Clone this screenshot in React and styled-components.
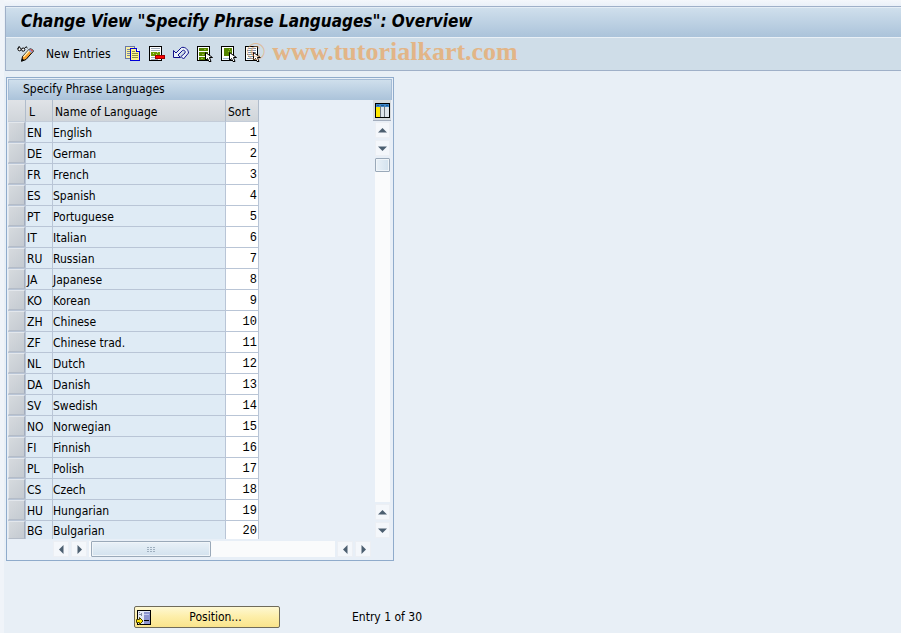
import React, { useState } from 'react'
import styled, { createGlobalStyle } from 'styled-components'

const languages = [
    ['EN', 'English'],
    ['DE', 'German'],
    ['FR', 'French'],
    ['ES', 'Spanish'],
    ['PT', 'Portuguese'],
    ['IT', 'Italian'],
    ['RU', 'Russian'],
    ['JA', 'Japanese'],
    ['KO', 'Korean'],
    ['ZH', 'Chinese'],
    ['ZF', 'Chinese trad.'],
    ['NL', 'Dutch'],
    ['DA', 'Danish'],
    ['SV', 'Swedish'],
    ['NO', 'Norwegian'],
    ['FI', 'Finnish'],
    ['PL', 'Polish'],
    ['CS', 'Czech'],
    ['HU', 'Hungarian'],
    ['BG', 'Bulgarian'],
]

const GlobalStyle = createGlobalStyle`
    * {
        box-sizing: border-box;
    }
    body {
        margin: 0;
        background: #e8eff6;
        color: #000;
        font: 12px/20px 'DejaVu Sans Condensed', 'DejaVu Sans', sans-serif;
        font-stretch: condensed;
    }
    button, input {
        font: inherit;
        color: inherit;
        border: 0;
        margin: 0;
        padding: 0;
    }
`

const Page = styled.div`
    min-height: 100vh;
    padding: 6px 0 0 1px;
    border-left: 4px solid #f0f4f9;
    background: linear-gradient(#f4f7fb, #eaf0f8 6px, #e8eff6 7px);
`

const Header = styled.header`
    border: 1px solid #9fb0c8;
    border-right: 0;
`

const Title = styled.h1`
    margin: 0;
    height: 31px;
    padding: 0 15px;
    border-top: 1px solid #e4edf5;
    border-bottom: 1px solid #e9f0f6;
    background: linear-gradient(#cfdfec, #abc3da);
    font-size: 17px;
    font-style: italic;
    line-height: 26px;
    white-space: nowrap;
`

const Toolbar = styled.div`
    position: relative;
    display: flex;
    align-items: center;
    gap: 8px;
    height: 32px;
    padding: 0 11px;
    background: #cfdde8;
`

const ToolButton = styled.button`
    display: flex;
    flex: none;
    background: none;
    white-space: nowrap;
`

const TextButton = styled(ToolButton)`
    margin: 0 6px 0 4px;
`

const Watermark = styled.span`
    position: absolute;
    left: 240px;
    top: 0;
    color: #e9a867;
    opacity: 0.75;
    font: bold 26px/28px 'Liberation Serif', serif;
    white-space: nowrap;
    pointer-events: none;
`

const Mark = styled.span`
    font-weight: normal;
    opacity: 0.8;
`

const Main = styled.main`
    padding: 6px 0 0 1px;
`

const Panel = styled.section`
    width: 388px;
    max-width: 100%;
    border: 1px solid #8fabcb;
    padding: 1px;
    background: #e8eff7;
`

const PanelTitle = styled.h2`
    margin: 0;
    height: 21px;
    padding: 0 14px;
    border: 1px solid #a5bcd6;
    border-bottom: 0;
    background: linear-gradient(#cfdfec, #abc3da);
    font-size: 12px;
    font-weight: normal;
    line-height: 18px;
`

const PanelBody = styled.div`
    display: flex;
    justify-content: space-between;
`

const Table = styled.table`
    table-layout: fixed;
    width: 251px;
    border-collapse: separate;
    border-spacing: 0;
`

const Th = styled.th`
    width: ${props => props.$width};
    height: 22px;
    padding: 2px 2px 0 ${props => props.$indent || '2px'};
    border-right: 1px solid #b0bccb;
    border-bottom: 1px solid #c3ccd8;
    background: linear-gradient(#e0e3e7, #d0d5da);
    font-weight: normal;
    line-height: 18px;
    text-align: left;
    white-space: nowrap;
`

const Td = styled.td`
    height: 21px;
    padding: ${props => (props.$control ? '0' : '2px')} 0 0 ${props => (props.$indent ? '1px' : '0')};
    border-right: 1px solid #b9c5d6;
    border-bottom: 1px solid #b9c5d6;
    background: ${props => (props.$editable ? '#fff' : '#dfebf5')};
    line-height: 18px;
    white-space: nowrap;

    tr:last-child > & {
        height: 18px;
        border-bottom: 0;
        line-height: 16px;
    }
`

const RowSelector = styled.button`
    display: block;
    width: 17px;
    height: ${props => (props.$last ? '18px' : '20px')};
    border: 1px solid #e3e7ec;
    border-right-color: #a3adbd;
    border-bottom-color: #b4bcc8;
    background: ${props =>
        props.$selected ? '#f5d77c' : 'linear-gradient(135deg, #d6dade, #c4cad1)'};
`

const SortInput = styled.input`
    display: block;
    width: 100%;
    height: ${props => (props.$last ? '18px' : '20px')};
    padding: 1px 1px 0 0;
    background: none;
    font: 12px 'Liberation Mono', monospace;
    text-align: right;
    outline: none;
`

const SideBar = styled.div`
    display: flex;
    flex-direction: column;
    align-items: flex-end;
    padding-right: 1px;
`

const ConfigButton = styled.button`
    display: flex;
    align-items: center;
    justify-content: center;
    width: 18px;
    height: 21px;
    margin-bottom: 1px;
    border-bottom: 1px solid #a3adbd;
    background: #d6dade;
`

const VerticalScroll = styled.div`
    display: flex;
    flex: 1;
    flex-direction: column;
    gap: 2px;
    width: 15px;
    margin: 0 1px 1px 0;
`

const HorizontalScroll = styled.div`
    display: flex;
    gap: 2px;
    height: 16px;
    margin: 2px 21px 2px 45px;
`

const ScrollButton = styled.button`
    display: flex;
    flex: none;
    align-items: center;
    justify-content: center;
    width: ${props => (props.$vertical ? '15px' : '16px')};
    height: 16px;
    border: 1px solid #eceff4;
    background: #f4f7fb;
`

const Track = styled.div`
    flex: 1;
    padding-left: ${props => (props.$vertical ? '0' : '2px')};
    background: #fafbfc;
`

const Thumb = styled.div`
    display: flex;
    align-items: center;
    justify-content: center;
    width: ${props => (props.$vertical ? '15px' : '120px')};
    height: ${props => (props.$vertical ? '14px' : '16px')};
    border: 1px solid #9aa9b9;
    border-radius: 1px;
    background: linear-gradient(${props => (props.$vertical ? '90deg' : '180deg')}, #e9f1f8, #d3e2ee);
    box-shadow: inset 0 0 0 1px #f0f5f9;
`

const Footer = styled.footer`
    display: flex;
    align-items: center;
    gap: 72px;
    padding: 45px 0 5px 128px;
`

const PositionButton = styled.button`
    display: grid;
    grid-template-columns: 16px 1fr;
    align-items: center;
    width: 146px;
    height: 22px;
    padding: 0 0 0 1px;
    border: 1px solid #6f6b5a;
    border-radius: 2px;
    background: linear-gradient(#fef8d2, #fdeea8 50%, #fae48c);
`

const Icon = ({ children, width = 16, height = 16 }) => (
    <svg width={width} height={height} viewBox={`0 0 ${width} ${height}`} shapeRendering="crispEdges" aria-hidden="true">
        {children}
    </svg>
)

const ChangeIcon = () => (
    <svg width="17" height="16" viewBox="0 0 17 16" aria-hidden="true">
        <path d="M2.500 0L.7 2.500" fill="none" stroke="#000" />
        <circle cx="2.500" cy="3.200" r="1.600" fill="#fff" stroke="#000" />
        <circle cx="6.200" cy="3.600" r="1.600" fill="#fff" stroke="#000" />
        <path d="M7.500 2.500L9 .7l1.500 1.300" fill="none" stroke="#000" />
        <path d="M5.500 10.500l7-7.500h2l2 2-7.500 8.500-4.500 1.800z" fill="#f9a02c" stroke="#000" />
        <path d="M6.500 10.800l6-6.500" stroke="#fff7c4" strokeWidth="1.300" />
        <path d="M11.500 4.500l1.300-1.300h1.500l1.700 1.700-1.700 2z" fill="#8fa0e0" />
        <path d="M13 3.200h1.500l1.500 1.600-1 1z" fill="#e0504a" />
        <path d="M4.300 15.300l.9-3 2.200 1.900z" fill="#000" />
    </svg>
)

const CopyIcon = () => (
    <Icon>
        <path d="M.5.5h9v12h-9z" fill="#fbf2a0" stroke="#6878a8" />
        <path d="M2 3.500h3M2 5.500h3M2 7.500h3M2 9.500h3" stroke="#7483a8" />
        <path d="M5.500 2.500h6l3 3v9h-9z" fill="#fff48a" stroke="#0000d8" />
        <path d="M11.500 2.500v3h3" fill="#fff" stroke="#0000d8" />
        <path d="M7 5.500h3M7 7.500h6M7 9.500h6M7 11.500h6" stroke="#8b9148" />
    </Icon>
)

const DeleteIcon = () => (
    <Icon>
        <path d="M.5.5h12v14H.5z" fill="#fff" stroke="#000" />
        <path d="M2 2.500h9M2 4.500h9M2 11.500h5M2 13.500h7" stroke="#a0acba" />
        <path d="M2 6h9v4H2z" fill="#6c9a00" />
        <path d="M4 7h1v1H4zM7 8h1v1H7zM8 6h1v1H8z" fill="#cbdc8c" />
        <path d="M6.500 9.500h9v3h-9z" fill="#f00" stroke="#900" />
    </Icon>
)

const UndoIcon = () => (
    <svg width="16" height="16" viewBox="0 0 16 16" aria-hidden="true">
        <path
            d="M.5 4.500v7h7l-2.500-2.500 4.500-4.500c1-1 3.500.5 2.500 2.500L8 10.500l2.500 2.500 5-6c0-3-3-6.500-7-5.500L3 7z"
            fill="#e8f0f8"
            stroke="#10108c"
        />
    </svg>
)

const Cursor = () => (
    <path d="M8.500 6.500v8l2-2 1.500 3h2l-1.500-4h3z" fill="#fff" stroke="#000" shapeRendering="auto" />
)

const SelectAllIcon = () => (
    <Icon>
        <path d="M.5.5h12v14H.5z" fill="#fff" stroke="#000" />
        <path d="M2 2h9v3H2zM2 6h9v4H2zM2 11h9v3H2z" fill="#568500" />
        <path d="M7 3h2v1H7zM5 8h2v1H5zM4 12h2v1H4z" fill="#9abc3c" />
        <Cursor />
    </Icon>
)

const SelectBlockIcon = () => (
    <Icon>
        <path d="M.5.5h12v14H.5z" fill="#fff" stroke="#000" />
        <path d="M3 2h8v8H3z" fill="#568500" />
        <path d="M8 3h1v1H8zM7 5h1v1H7zM9 5h1v1H9zM8 7h1v1H8z" fill="#9abc3c" />
        <path d="M2 12.500h6" stroke="#a0b8d0" />
        <Cursor />
    </Icon>
)

const DeselectIcon = () => (
    <Icon>
        <path d="M.5.5h12v14H.5z" fill="#fff" stroke="#000" />
        <path d="M3 2.500h8M2 4.500h9M3 6.500h8M2 8.500h6M3 10.500h5M2 12.500h6" stroke="#7891a8" />
        <Cursor />
    </Icon>
)

const ConfigIcon = () => (
    <Icon width={15} height={15}>
        <path d="M.5.5h14v14H.5z" fill="#fff" stroke="#000" />
        <path d="M1 1h13v3H1z" fill="#3d85c8" />
        <path d="M1 4h4v10H1z" fill="#ffe800" />
        <path d="M6 4h3v10H6zM10 4h4v10h-4z" fill="#dfe4ea" />
        <path d="M5.500 3v11M9.500 3v11" stroke="#70777f" />
        <path d="M2 2.500h2M6 2.500h3M11 2.500h2" stroke="#1e5896" />
    </Icon>
)

const PositionIcon = () => (
    <Icon width={15} height={15}>
        <path d="M1.500.5h13v14h-13z" fill="#e4e8f4" stroke="#000" />
        <path d="M8 2h6v12H8z" fill="#8d94ce" />
        <path d="M8 4.500h5" stroke="#c3c9ee" />
        <path d="M8 10.500h5" stroke="#000" />
        <path d="M3 4.500h3M5.500 3v3M3 2.500h1" stroke="#7f879e" />
        <path d="M.5 9.500h3v-2l3.500 3.500-3.500 3.500v-2h-3z" fill="#ffe500" stroke="#4e4400" shapeRendering="auto" />
    </Icon>
)

const arrows = {
    up: 'M0 6.500l4.500-4.500L9 6.500z',
    down: 'M0 2.500h9L4.500 7z',
    left: 'M6.500 0v9L2 4.500z',
    right: 'M2.500 0v9L7 4.500z',
}

const Scroller = ({ direction, label }) => (
    <ScrollButton
        aria-label={label || `Scroll ${direction}`}
        $vertical={direction === 'up' || direction === 'down'}
    >
        <svg width="9" height="9" viewBox="0 0 9 9" aria-hidden="true">
            <path d={arrows[direction]} fill="#4c5f70" />
        </svg>
    </ScrollButton>
)

const Grip = () => (
    <Icon width={8} height={5}>
        <path d="M0 0h2v1H0zM3 0h2v1H3zM6 0h2v1H6zM0 2h2v1H0zM3 2h2v1H3zM6 2h2v1H6zM0 4h2v1H0zM3 4h2v1H3zM6 4h2v1H6z" fill="#9fb0c0" />
    </Icon>
)

const tools = [
    ['Copy As', CopyIcon],
    ['Delete', DeleteIcon],
    ['Undo', UndoIcon],
    ['Select All', SelectAllIcon],
    ['Select Block', SelectBlockIcon],
    ['Deselect All', DeselectIcon],
]

const LanguageTable = () => {
    const [selected, setSelected] = useState(null)
    const last = languages.length - 1

    return (
        <Table>
            <thead>
                <tr>
                    <Th $width="18px" aria-label="Selection" />
                    <Th $width="27px" $indent="3px">L</Th>
                    <Th $width="173px">Name of Language</Th>
                    <Th $width="33px">Sort</Th>
                </tr>
            </thead>
            <tbody>
                {languages.map(([code, name], index) => (
                    <tr key={code}>
                        <Td $control>
                            <RowSelector
                                aria-label={`Select ${name}`}
                                $last={index === last}
                                $selected={selected === index}
                                onClick={() => setSelected(selected === index ? null : index)}
                            />
                        </Td>
                        <Td $indent>{code}</Td>
                        <Td>{name}</Td>
                        <Td $control $editable>
                            <SortInput aria-label={`Sort ${name}`} $last={index === last} defaultValue={index + 1} />
                        </Td>
                    </tr>
                ))}
            </tbody>
        </Table>
    )
}

const App = () => {
    return (
        <Page>
            <GlobalStyle />
            <Header>
                <Title>Change View "Specify Phrase Languages": Overview</Title>
                <Toolbar>
                    <ToolButton aria-label="Display / Change"><ChangeIcon /></ToolButton>
                    <TextButton>New Entries</TextButton>
                    {tools.map(([label, ToolIcon]) => (
                        <ToolButton key={label} aria-label={label}><ToolIcon /></ToolButton>
                    ))}
                    <Watermark><Mark>©</Mark> www.tutorialkart.com</Watermark>
                </Toolbar>
            </Header>
            <Main>
                <Panel>
                    <PanelTitle>Specify Phrase Languages</PanelTitle>
                    <PanelBody>
                        <LanguageTable />
                        <SideBar>
                            <ConfigButton aria-label="Configuration"><ConfigIcon /></ConfigButton>
                            <VerticalScroll>
                                <Scroller direction="up" />
                                <Scroller direction="down" />
                                <Track $vertical><Thumb $vertical /></Track>
                                <Scroller direction="up" label="Previous page" />
                                <Scroller direction="down" label="Next page" />
                            </VerticalScroll>
                        </SideBar>
                    </PanelBody>
                    <HorizontalScroll>
                        <Scroller direction="left" />
                        <Scroller direction="right" />
                        <Track><Thumb><Grip /></Thumb></Track>
                        <Scroller direction="left" label="Previous column" />
                        <Scroller direction="right" label="Next column" />
                    </HorizontalScroll>
                </Panel>
                <Footer>
                    <PositionButton><PositionIcon /><span>Position...</span></PositionButton>
                    <span>Entry 1 of 30</span>
                </Footer>
            </Main>
        </Page>
    )
}

export default App
